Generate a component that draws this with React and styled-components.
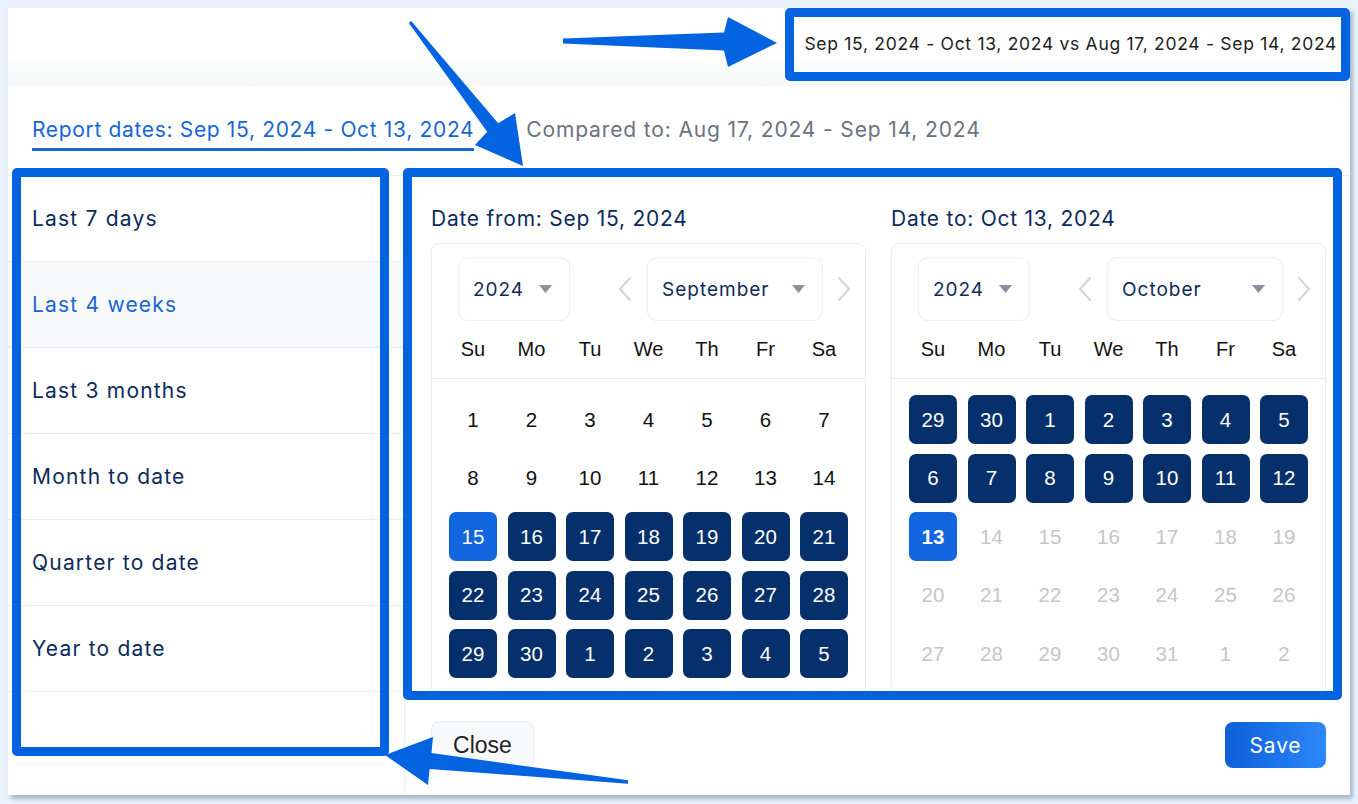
import React from "react";
import styled, { createGlobalStyle, css } from "styled-components";

const GlobalStyle = createGlobalStyle`
  html, body { margin: 0; padding: 0; }
  body { font-family: "Inter", "Liberation Sans", sans-serif; background: #eaf3fc; }
  * { box-sizing: border-box; }
`;

const BLUE = "#0363e0";
const NAVY = "#0c2b5d";
const UI_FONT = `"Inter", "Liberation Sans", sans-serif`;
const CAL_FONT = `"Liberation Sans", Arial, sans-serif`;

const Page = styled.div`
  position: relative;
  width: 1358px;
  height: 804px;
  padding: 8px 8px 9px 8px;
  background: #eaf3fc;
  overflow: hidden;
`;

const Card = styled.div`
  height: 787px;
  background: #fff;
  display: flex;
  flex-direction: column;
  box-shadow: 3px 4px 4px rgba(150, 165, 190, 0.75);
`;

const Header = styled.div`
  height: 78px;
  display: flex;
  justify-content: flex-end;
  align-items: flex-start;
  padding: 24px 13px 0 0;
  background: linear-gradient(#ffffff 55%, #f7f8f9);
`;

const Summary = styled.div`
  font-family: ${UI_FONT};
  font-size: 17.5px;
  line-height: 24px;
  color: #1d1d1f;
  letter-spacing: 0.7px;
  white-space: nowrap;
`;

const TabRow = styled.div`
  display: flex;
  gap: 52px;
  padding: 29px 24px 24px;
  border-bottom: 1px solid #ececee;
`;

const Tab = styled.div`
  font-family: ${UI_FONT};
  font-size: 21px;
  line-height: 30px;
  letter-spacing: ${(p) => (p.$active ? 0.66 : 0.86)}px;
  white-space: nowrap;
  padding-bottom: 3px;
  color: ${(p) => (p.$active ? "#1766d6" : "#6b7280")};
  border-bottom: 3px solid ${(p) => (p.$active ? "#1766d6" : "transparent")};
`;

const Body = styled.div`
  flex: 1;
  display: flex;
  min-height: 0;
`;

const PresetList = styled.div`
  width: 397px;
  border-right: 1px solid #ececee;
  display: flex;
  flex-direction: column;
`;

const PresetItem = styled.div`
  height: 86px;
  display: flex;
  align-items: center;
  padding-left: 24px;
  border-bottom: 1px solid #ececee;
  font-family: ${UI_FONT};
  font-size: 21px;
  letter-spacing: 1.2px;
  color: ${(p) => (p.$active ? "#1766d6" : NAVY)};
  background: ${(p) => (p.$active ? "#f8f9fb" : "#fff")};
`;

const Main = styled.div`
  flex: 1;
  display: flex;
  flex-direction: column;
  padding: 28px 24px 0 26px;
`;

const Calendars = styled.div`
  display: grid;
  grid-template-columns: 435px 435px;
  column-gap: 25px;
`;

const CalColumn = styled.div`
  display: flex;
  flex-direction: column;
`;

const CalTitle = styled.div`
  font-family: ${UI_FONT};
  font-size: 21px;
  line-height: 30px;
  letter-spacing: 0.75px;
  white-space: nowrap;
  color: ${NAVY};
  margin-bottom: 9px;
`;

const CalBox = styled.div`
  border: 1px solid #ececef;
  border-radius: 8px;
  height: 453px;
  display: flex;
  flex-direction: column;
`;

const CalHeader = styled.div`
  display: flex;
  align-items: center;
  padding: 13px 0 0 26px;
  height: 77px;
`;

const Select = styled.div`
  width: ${(p) => p.$w}px;
  height: 64px;
  border: 1px solid #ebedf0;
  border-radius: 10px;
  display: flex;
  align-items: center;
  justify-content: space-between;
  padding: 0 17px 0 14px;
  font-family: ${UI_FONT};
  font-size: 19px;
  letter-spacing: 1px;
  color: ${NAVY};
`;

const Chevron = styled.svg`
  width: 22px;
  height: 26px;
  flex: none;
  margin-left: ${(p) => p.$ml}px;
  margin-right: ${(p) => p.$mr}px;
`;

const Caret = styled.svg`
  width: 13px;
  height: 8px;
`;

const WeekRow = styled.div`
  display: grid;
  grid-template-columns: repeat(7, 48px);
  justify-content: space-between;
  padding: 0 17px;
  height: 58px;
  align-items: center;
  border-bottom: 1px solid #ececef;
  font-family: ${CAL_FONT};
  font-size: 20px;
  color: #111;
`;

const WeekDay = styled.div`
  text-align: center;
`;

const DayGrid = styled.div`
  display: grid;
  grid-template-columns: repeat(7, 48px);
  grid-auto-rows: 49px;
  row-gap: 9.5px;
  justify-content: space-between;
  padding: 16px 17px 0;
`;

const variants = {
  plain: css`color: #111;`,
  muted: css`color: #c6c6c8;`,
  range: css`background: #05306b; color: #fff;`,
  edge: css`background: #1166e0; color: #fff;`,
};

const Day = styled.div`
  display: flex;
  align-items: center;
  justify-content: center;
  border-radius: 7px;
  font-family: ${CAL_FONT};
  font-size: 20.5px;
  font-weight: ${(p) => (p.$bold ? 700 : 400)};
  ${(p) => variants[p.$v]}
`;

const Footer = styled.div`
  display: flex;
  justify-content: space-between;
  align-items: center;
  margin-top: 25px;
  height: 48px;
`;

const CloseButton = styled.button`
  width: 103px;
  height: 48px;
  background: #f8f9fa;
  border: 1px solid #eaecef;
  border-radius: 8px;
  font-family: ${CAL_FONT};
  font-size: 23px;
  color: #222;
  padding: 0;
`;

const SaveButton = styled.button`
  width: 101px;
  height: 46px;
  border: none;
  border-radius: 8px;
  background: linear-gradient(90deg, #0d5fd7, #2b88f8);
  font-family: ${UI_FONT};
  font-size: 21px;
  letter-spacing: 0.8px;
  color: #fff;
  padding: 0;
`;

const Highlight = styled.div`
  position: absolute;
  left: ${(p) => p.$x}px;
  top: ${(p) => p.$y}px;
  width: ${(p) => p.$w}px;
  height: ${(p) => p.$h}px;
  border: 9px solid ${BLUE};
  border-radius: 5px;
  pointer-events: none;
`;

const ArrowLayer = styled.svg`
  position: absolute;
  left: 0;
  top: 0;
  width: 1358px;
  height: 804px;
  pointer-events: none;
`;

const ChevronIcon = ({ dir, ml, mr }) => (
  <Chevron viewBox="0 0 22 26" $ml={ml} $mr={mr}>
    <polyline
      points={dir === "left" ? "16,2 6,13 16,24" : "6,2 16,13 6,24"}
      fill="none"
      stroke="#d3d5da"
      strokeWidth="2"
      strokeLinecap="round"
      strokeLinejoin="round"
    />
  </Chevron>
);

const CaretIcon = () => (
  <Caret viewBox="0 0 13 8">
    <polygon points="0,0 13,0 6.5,8" fill="#8c8fa1" />
  </Caret>
);

const WEEK = ["Su", "Mo", "Tu", "We", "Th", "Fr", "Sa"];

const sepDays = [
  ...[1, 2, 3, 4, 5, 6, 7, 8, 9, 10, 11, 12, 13, 14].map((d) => ({ d, v: "plain" })),
  { d: 15, v: "edge" },
  ...[16, 17, 18, 19, 20, 21, 22, 23, 24, 25, 26, 27, 28, 29, 30, 1, 2, 3, 4, 5].map((d) => ({ d, v: "range" })),
];

const octDays = [
  ...[29, 30, 1, 2, 3, 4, 5, 6, 7, 8, 9, 10, 11, 12].map((d) => ({ d, v: "range" })),
  { d: 13, v: "edge", bold: true },
  ...[14, 15, 16, 17, 18, 19, 20, 21, 22, 23, 24, 25, 26, 27, 28, 29, 30, 31, 1, 2].map((d) => ({ d, v: "muted" })),
];

const Calendar = ({ title, month, days }) => (
  <CalColumn>
    <CalTitle>{title}</CalTitle>
    <CalBox>
      <CalHeader>
        <Select $w={112}>
          <span>2024</span>
          <CaretIcon />
        </Select>
        <ChevronIcon dir="left" ml={44} mr={11} />
        <Select $w={176}>
          <span>{month}</span>
          <CaretIcon />
        </Select>
        <ChevronIcon dir="right" ml={10} mr={0} />
      </CalHeader>
      <WeekRow>
        {WEEK.map((w) => (
          <WeekDay key={w}>{w}</WeekDay>
        ))}
      </WeekRow>
      <DayGrid>
        {days.map((x, i) => (
          <Day key={i} $v={x.v} $bold={x.bold}>
            {x.d}
          </Day>
        ))}
      </DayGrid>
    </CalBox>
  </CalColumn>
);

const PRESETS = ["Last 7 days", "Last 4 weeks", "Last 3 months", "Month to date", "Quarter to date", "Year to date"];

export default function App() {
  return (
    <>
      <GlobalStyle />
      <Page>
        <Card>
          <Header>
            <Summary>Sep 15, 2024 - Oct 13, 2024 vs Aug 17, 2024 - Sep 14, 2024</Summary>
          </Header>
          <TabRow>
            <Tab $active>Report dates: Sep 15, 2024 - Oct 13, 2024</Tab>
            <Tab>Compared to: Aug 17, 2024 - Sep 14, 2024</Tab>
          </TabRow>
          <Body>
            <PresetList>
              {PRESETS.map((p) => (
                <PresetItem key={p} $active={p === "Last 4 weeks"}>
                  {p}
                </PresetItem>
              ))}
            </PresetList>
            <Main>
              <Calendars>
                <Calendar title="Date from: Sep 15, 2024" month="September" days={sepDays} />
                <Calendar title="Date to: Oct 13, 2024" month="October" days={octDays} />
              </Calendars>
              <Footer>
                <CloseButton>Close</CloseButton>
                <SaveButton>Save</SaveButton>
              </Footer>
            </Main>
          </Body>
        </Card>

        <Highlight $x={785} $y={8} $w={565} $h={73} />
        <Highlight $x={12} $y={168} $w={377} $h={588} />
        <Highlight $x={403} $y={168} $w={939} $h={532} />

        <ArrowLayer viewBox="0 0 1358 804">
          <polygon fill={BLUE} points="563,38.5 724,32.5 728,17 777,43 728,67 724,50.5 563,43.5" />
          <polygon fill={BLUE} points="411.2,21.1 498.2,123.2 515,113 523,166 475,145 487.2,131.8 408.8,22.9" />
          <polygon fill={BLUE} points="628.2,780.3 431.4,753 433,737 385,755 428,785 429.6,769 627.8,783.7" />
        </ArrowLayer>
      </Page>
    </>
  );
}
